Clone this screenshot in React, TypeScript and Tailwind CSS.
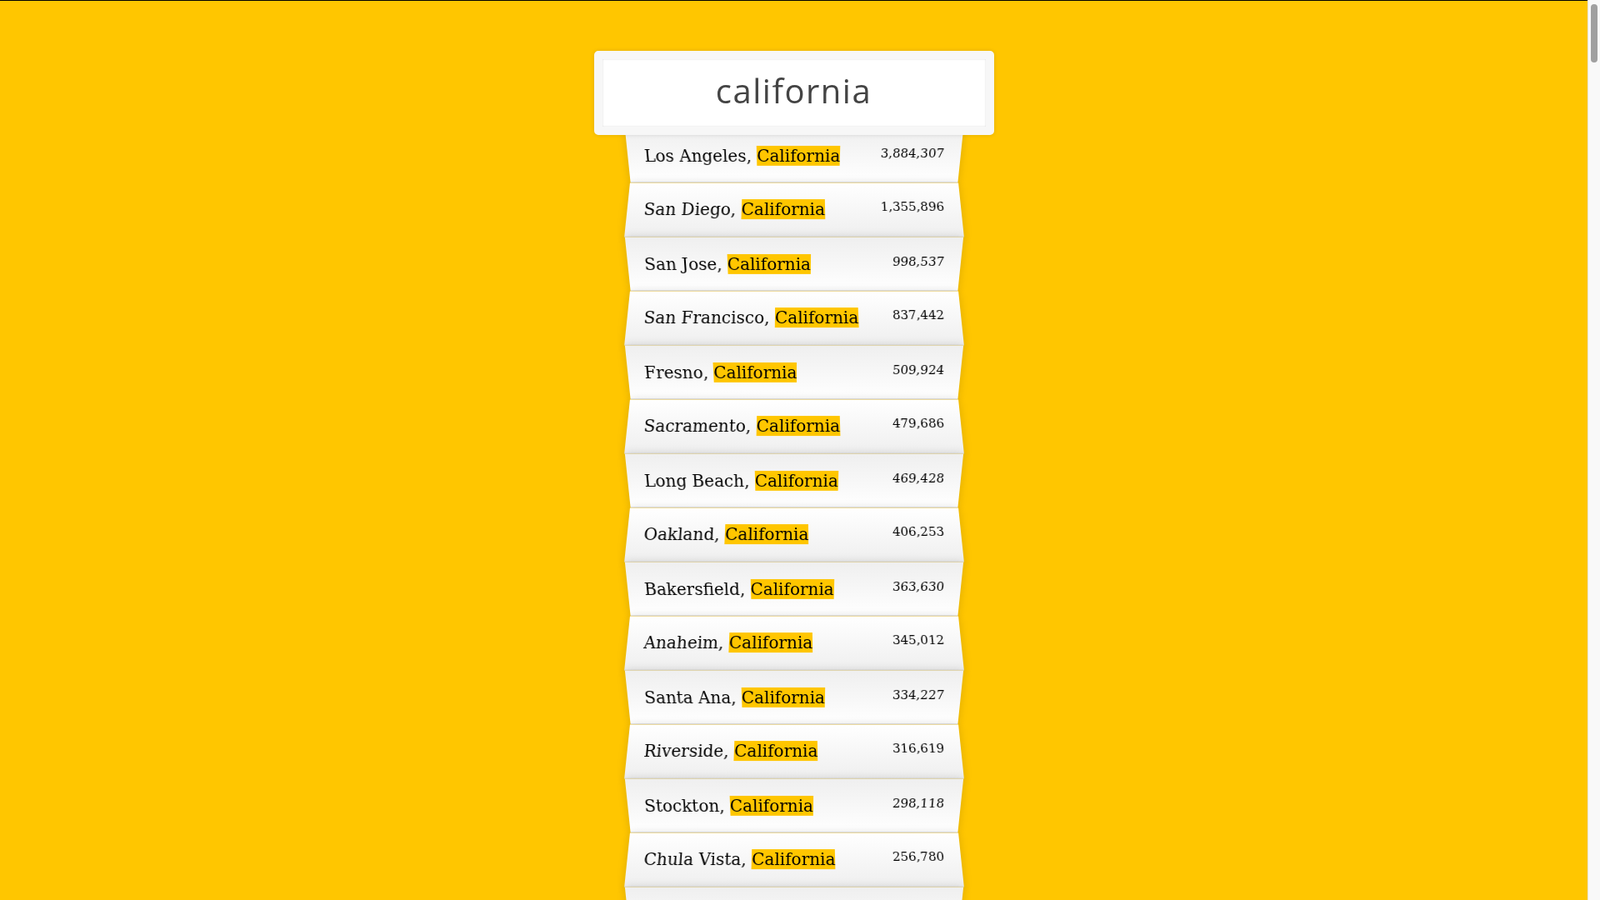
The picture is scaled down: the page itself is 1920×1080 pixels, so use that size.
const cities: [string, string][] = [
  ["Los Angeles", "3,884,307"],
  ["San Diego", "1,355,896"],
  ["San Jose", "998,537"],
  ["San Francisco", "837,442"],
  ["Fresno", "509,924"],
  ["Sacramento", "479,686"],
  ["Long Beach", "469,428"],
  ["Oakland", "406,253"],
  ["Bakersfield", "363,630"],
  ["Anaheim", "345,012"],
  ["Santa Ana", "334,227"],
  ["Riverside", "316,619"],
  ["Stockton", "298,118"],
  ["Chula Vista", "256,780"],
  ["Irvine", "236,716"],
  ["Fremont", "224,922"],
  ["San Bernardino", "213,295"],
  ["Modesto", "204,933"],
  ["Oxnard", "203,007"],
  ["Fontana", "203,003"],
  ["Moreno Valley", "201,175"],
  ["Glendale", "196,021"],
  ["Huntington Beach", "194,708"],
  ["Santa Clarita", "179,590"],
  ["Garden Grove", "175,140"],
  ["Oceanside", "172,794"],
  ["Santa Rosa", "171,990"],
  ["Rancho Cucamonga", "171,386"],
  ["Ontario", "167,500"],
  ["Elk Grove", "161,007"],
  ["Lancaster", "159,523"],
  ["Corona", "159,503"],
  ["Palmdale", "157,161"],
  ["Salinas", "155,662"],
  ["Hayward", "151,574"],
  ["Pomona", "151,348"],
  ["Escondido", "148,738"],
  ["Sunnyvale", "147,559"],
  ["Torrance", "147,478"],
  ["Orange", "139,969"],
];

export default function App() {
  return (
    <div className="flex h-screen overflow-hidden">
      <div className="flex-1 min-w-0 h-full overflow-hidden bg-[#ffc600] font-['DejaVu_Serif',serif] text-[20px] text-black">
        <div className="h-px bg-black" />
        <form className="w-[400px] mx-auto mt-[50px] mb-[50px] flex flex-col" onSubmit={(e) => e.preventDefault()}>
          <input
            type="text"
            defaultValue="california"
            className="relative z-10 w-[480px] h-[101px] -ml-[40px] mt-[10px] -mb-[10px] px-[20px] pt-[17px] pb-[23px] border-[10px] border-[#f7f7f7] rounded-[5px] bg-white text-center text-[40px] font-normal tracking-[1.5px] text-[#444] font-['Open_Sans',sans-serif] outline-none shadow-[0_0_5px_rgba(0,0,0,0.12),inset_0_0_2px_rgba(0,0,0,0.19)]"
          />
          <ul className="relative m-0 p-0">
            {cities.map(([name, pop]) => (
              <li
                key={name}
                className="list-none m-0 p-[20px] flex justify-between capitalize leading-[normal] border-b border-[#d8d8d8] shadow-[0_0_10px_rgba(0,0,0,0.14)] odd:[transform:perspective(100px)_rotateX(-3deg)_translateY(3px)] odd:bg-[linear-gradient(to_top,#ffffff_0%,#efefef_100%)] even:[transform:perspective(100px)_rotateX(3deg)_translateY(2px)_scale(1.001)] even:bg-[linear-gradient(to_bottom,#ffffff_0%,#efefef_100%)]"
              >
                <span>
                  {name}, <span className="bg-[#ffc600]">California</span>
                </span>
                <span className="text-[15px]">{pop}</span>
              </li>
            ))}
          </ul>
        </form>
      </div>
      {/* page scrollbar */}
      <div className="w-[15px] h-full shrink-0 bg-[#f9f9f9] border-l border-[#e6e6e6] pt-[5px] pl-[3px]">
        <div className="w-[8px] h-[70px] rounded-full bg-[#a0a0a0]" />
      </div>
    </div>
  );
}
